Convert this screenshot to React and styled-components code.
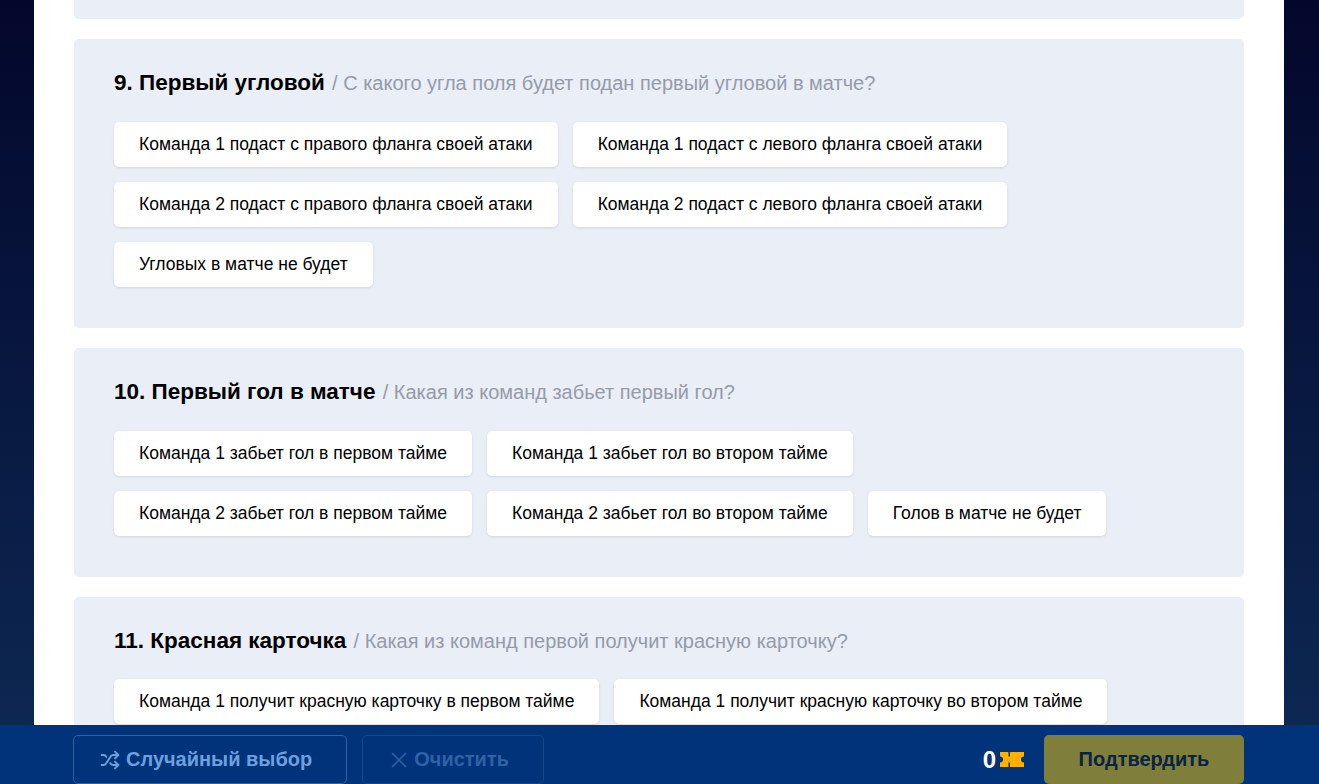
import React from 'react';
import styled, { createGlobalStyle } from 'styled-components';
import { Shuffle } from 'lucide-react';

const GlobalStyle = createGlobalStyle`
  html, body {
    margin: 0;
    height: 100%;
    overflow: hidden;
  }
  body {
    font-family: "Liberation Sans", Arial, sans-serif;
    background: #04082c;
  }
`;

const Page = styled.div`
  height: 100vh;
  display: flex;
  flex-direction: column;
  background: linear-gradient(180deg, #03072b 0%, #0d2a55 100%);
`;

const Content = styled.main`
  flex: 1;
  min-height: 0;
  overflow: hidden;
  width: 1250px;
  margin-left: 34px;
  padding: 0 40px;
  box-sizing: border-box;
  background: #fff;
  display: flex;
  flex-direction: column;
  gap: 20px;
`;

const Card = styled.section`
  flex: none;
  background: #e9eef7;
  border-radius: 5px;
  padding: 30px 40px 41px;
`;

const CardTail = styled.div`
  flex: none;
  height: 19px;
  background: #e9eef7;
  border-radius: 0 0 5px 5px;
`;

const Title = styled.h2`
  margin: 0 0 24.8px;
  font-size: 22.5px;
  line-height: 28px;
  font-weight: 700;
  color: #000;
`;

const Hint = styled.span`
  font-size: 20px;
  font-weight: 400;
  color: #959ba8;
  margin-left: 1px;
`;

const Options = styled.div`
  display: flex;
  flex-wrap: wrap;
  gap: 15px;
`;

const Option = styled.button`
  height: 45px;
  padding: 0 25px;
  border: 0;
  border-radius: 5px;
  background: #fff;
  box-shadow: 0 1px 3px rgba(0, 0, 0, 0.1);
  font: 400 17.5px "Liberation Sans", Arial, sans-serif;
  color: #000;
  cursor: pointer;
`;

const Footer = styled.footer`
  flex: none;
  height: 59px;
  background: #00337a;
  overflow: hidden;
`;

const FooterInner = styled.div`
  width: 1171px;
  margin: 10px 0 0 73px;
  display: flex;
  align-items: flex-start;
  gap: 15px;
`;

const GhostButton = styled.button`
  height: 49px;
  padding: 0 34px 0 26px;
  display: flex;
  align-items: center;
  gap: ${(p) => (p.disabled ? 5 : 6)}px;
  border: 1px solid ${(p) => (p.disabled ? '#154686' : '#2f619f')};
  border-radius: 5px;
  background: transparent;
  color: ${(p) => (p.disabled ? '#2f62a6' : '#6ea0e0')};
  font: 700 20px "Liberation Sans", Arial, sans-serif;
  cursor: pointer;
`;

const Balance = styled.div`
  margin-left: auto;
  margin-right: 5px;
  height: 49px;
  display: flex;
  align-items: center;
  gap: 4px;
  color: #fff;
  font-size: 24px;
  font-weight: 700;
`;

const Submit = styled.button`
  width: 200px;
  height: 49px;
  border: 0;
  border-radius: 5px;
  background: #7f7f3b;
  color: #0a2342;
  font: 700 20px "Liberation Sans", Arial, sans-serif;
  cursor: pointer;
`;

const CloseIcon = () => (
  <svg width="20" height="20" viewBox="0 0 20 20" fill="none" stroke="currentColor" strokeWidth="1.6">
    <path d="M3 3l14 14M17 3L3 17" />
  </svg>
);

const TicketIcon = () => (
  <svg width="24" height="15" viewBox="0 0 24 15" fill="#ffb000">
    <path d="M0 0h8.5v4.5h1.5V0h14v4.5a3 3 0 0 0 0 6V15H10v-4.5H8.5V15H0v-4.5a3 3 0 0 0 0-6z" />
  </svg>
);

const questions = [
  {
    title: '9. Первый угловой',
    hint: '/ С какого угла поля будет подан первый угловой в матче?',
    options: [
      'Команда 1 подаст с правого фланга своей атаки',
      'Команда 1 подаст с левого фланга своей атаки',
      'Команда 2 подаст с правого фланга своей атаки',
      'Команда 2 подаст с левого фланга своей атаки',
      'Угловых в матче не будет',
    ],
  },
  {
    title: '10. Первый гол в матче',
    hint: '/ Какая из команд забьет первый гол?',
    options: [
      'Команда 1 забьет гол в первом тайме',
      'Команда 1 забьет гол во втором тайме',
      'Команда 2 забьет гол в первом тайме',
      'Команда 2 забьет гол во втором тайме',
      'Голов в матче не будет',
    ],
  },
  {
    title: '11. Красная карточка',
    hint: '/ Какая из команд первой получит красную карточку?',
    options: [
      'Команда 1 получит красную карточку в первом тайме',
      'Команда 1 получит красную карточку во втором тайме',
    ],
  },
];

export default function App() {
  return (
    <Page>
      <GlobalStyle />
      <Content>
        <CardTail />
        {questions.map((q) => (
          <Card key={q.title}>
            <Title>
              {q.title} <Hint>{q.hint}</Hint>
            </Title>
            <Options>
              {q.options.map((o) => (
                <Option key={o}>{o}</Option>
              ))}
            </Options>
          </Card>
        ))}
      </Content>
      <Footer>
        <FooterInner>
          <GhostButton>
            <Shuffle size={20} strokeWidth={2.3} />
            Случайный выбор
          </GhostButton>
          <GhostButton disabled>
            <CloseIcon />
            Очистить
          </GhostButton>
          <Balance>
            0
            <TicketIcon />
          </Balance>
          <Submit>Подтвердить</Submit>
        </FooterInner>
      </Footer>
    </Page>
  );
}
